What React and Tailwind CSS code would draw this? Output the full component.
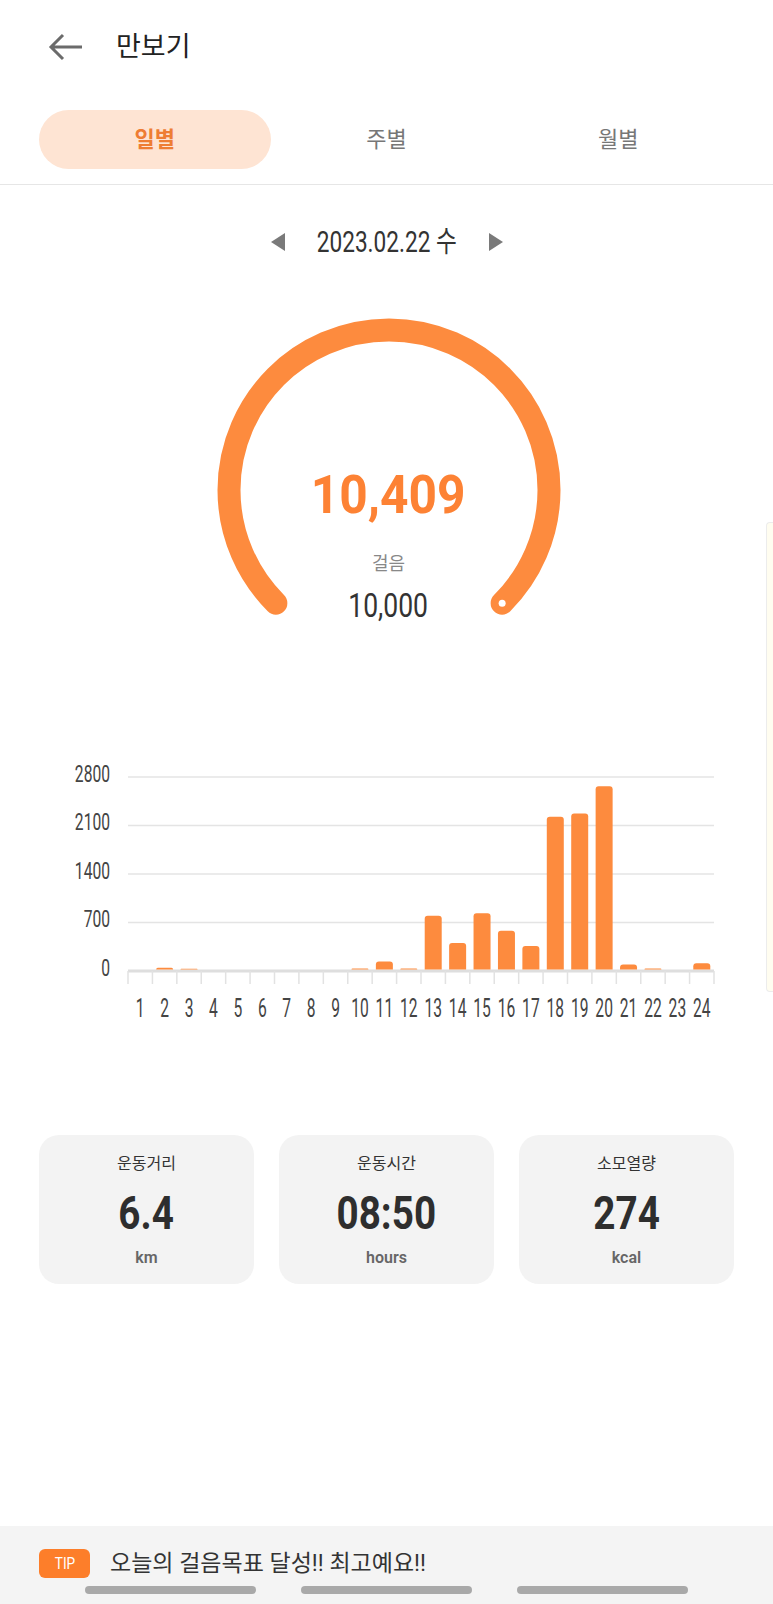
import React from "react";

const ORANGE = "#fd8b3e";

// steps per hour, read off the reference chart
const hourly = [0, 24, 10, 0, 0, 0, 0, 0, 0, 15, 116, 15, 774, 382, 812, 561, 339, 2205, 2253, 2645, 73, 15, 0, 92];

const Cond = ({ w, className = "", children }) => (
    <div className={`flex justify-center ${w}`}>
        <span className={`inline-block whitespace-nowrap ${className}`}>{children}</span>
    </div>
);

const Gauge = () => {
    const cx = 180;
    const cy = 172;
    const r = 160;
    const d = r * Math.SQRT1_2;
    return (
        <svg className="absolute inset-0" width="360" height="320" viewBox="0 0 360 320">
            <path
                d={`M ${cx - d} ${cy + d} A ${r} ${r} 0 1 1 ${cx + d} ${cy + d}`}
                fill="none"
                stroke={ORANGE}
                strokeWidth="23"
                strokeLinecap="round"
            />
            <circle cx={cx + d} cy={cy + d} r="3.5" fill="#fff" />
        </svg>
    );
};

const Chart = () => {
    const left = 128;
    const right = 714;
    const base = 221;
    const step = 48.5;
    const col = (right - left) / 24;
    const barW = 17;
    const perUnit = (step * 4) / 2800;
    const ticks = ["2800", "2100", "1400", "700", "0"];

    return (
        <svg width="773" height="280" viewBox="0 0 773 280" className="block">
            {ticks.map((t, i) => {
                const y = base - (4 - i) * step;
                return (
                    <g key={t}>
                        {i < 4 && <line x1={left} x2={right} y1={y} y2={y} stroke="#e4e4e4" strokeWidth="1.5" />}
                        <text
                            transform={`translate(110 ${y - 3}) scale(0.68 1)`}
                            textAnchor="end"
                            dominantBaseline="central"
                            fontSize="23"
                            fill="#444"
                        >
                            {t}
                        </text>
                    </g>
                );
            })}
            <line x1={left} x2={right} y1={base} y2={base} stroke="#dedede" strokeWidth="3" />
            {Array.from({ length: 25 }).map((_, i) => (
                <line
                    key={i}
                    x1={left + i * col}
                    x2={left + i * col}
                    y1={base}
                    y2={base + 13}
                    stroke="#e2e2e2"
                    strokeWidth="1.5"
                />
            ))}
            {hourly.map((v, i) => {
                const h = v * perUnit;
                const x = left + (i + 0.5) * col - barW / 2;
                const y = base - 1.5 - h;
                if (h <= 0) return null;
                const rr = Math.min(3, h);
                return (
                    <path
                        key={i}
                        d={`M ${x} ${base - 1.5} V ${y + rr} Q ${x} ${y} ${x + rr} ${y} H ${x + barW - rr} Q ${x + barW} ${y} ${x + barW} ${y + rr} V ${base - 1.5} Z`}
                        fill={ORANGE}
                    />
                );
            })}
            {hourly.map((_, i) => (
                <text
                    key={i}
                    transform={`translate(${left + (i + 0.5) * col} 258) scale(0.6 1)`}
                    textAnchor="middle"
                    dominantBaseline="central"
                    fontSize="26"
                    fill="#444"
                >
                    {i + 1}
                </text>
            ))}
        </svg>
    );
};

const StatCard = ({ label, value, unit }) => (
    <div className="flex-1 h-[149px] rounded-[20px] bg-[#f3f3f3] flex flex-col items-center pt-[18px]">
        <div className="text-[16px] leading-[22px] font-normal text-[#333]">{label}</div>
        <Cond w="w-full mt-[16px]" className="text-[46px] leading-[44px] font-bold text-[#2e2e2e] scale-x-[0.84]">
            {value}
        </Cond>
        <div className="mt-[13px] text-[16px] leading-[20px] font-semibold text-[#666]">{unit}</div>
    </div>
);

const App = () => {
    return (
        <div className="relative h-[1604px] overflow-hidden bg-white flex flex-col font-['Roboto','Noto_Sans_CJK_KR',sans-serif]">
            {/* header */}
            <div className="h-[94px] flex items-center pl-[48px] gap-[33px]">
                <svg width="35" height="28" viewBox="0 0 35 28">
                    <path d="M34 14 H3 M15 2 L3 14 L15 26" fill="none" stroke="#6b6b6b" strokeWidth="3" />
                </svg>
                <h1 className="text-[27px] leading-[30px] font-normal text-[#222]">만보기</h1>
            </div>

            {/* tabs */}
            <div className="px-[39px] pt-[16px] pb-[15px] grid grid-cols-3 border-b border-[#e6e6e6]">
                <button className="h-[59px] rounded-full bg-[#fee4d3] text-[22px] font-semibold text-[#ee7d33]">일별</button>
                <button className="h-[59px] rounded-full text-[22px] font-normal text-[#777]">주별</button>
                <button className="h-[59px] rounded-full text-[22px] font-normal text-[#777]">월별</button>
            </div>

            {/* date */}
            <div className="pt-[42px] flex justify-center items-center h-[72px]">
                <svg width="16" height="20" viewBox="0 0 16 20">
                    <polygon points="15,1 1,10 15,19" fill="#7a7a7a" />
                </svg>
                <Cond w="w-[146px] mx-[28px]" className="text-[29px] leading-[30px] text-[#333] scale-x-[0.78]">
                    2023.02.22 수
                </Cond>
                <svg width="16" height="20" viewBox="0 0 16 20">
                    <polygon points="1,1 15,10 1,19" fill="#7a7a7a" />
                </svg>
            </div>

            {/* gauge */}
            <div className="relative mx-auto mt-[61px] w-[360px] h-[320px] translate-x-[2px]">
                <Gauge />
                <div className="relative flex flex-col items-center pt-[147px]">
                    <Cond w="w-full" className="text-[54px] leading-[60px] font-bold text-[#fd8234] scale-x-[0.92]">
                        10,409
                    </Cond>
                    <div className="mt-[27px] text-[18px] leading-[24px] text-[#888]">걸음</div>
                    <Cond w="w-full mt-[11px]" className="text-[34px] leading-[36px] text-[#333] scale-x-[0.78]">
                        10,000
                    </Cond>
                </div>
            </div>

            {/* hourly chart */}
            <div className="mt-[112px]">
                <Chart />
            </div>

            {/* stats */}
            <div className="mt-[105px] px-[39px] flex gap-[25px]">
                <StatCard label="운동거리" value="6.4" unit="km" />
                <StatCard label="운동시간" value="08:50" unit="hours" />
                <StatCard label="소모열량" value="274" unit="kcal" />
            </div>

            {/* tip */}
            <div className="mt-auto h-[78px] bg-[#f4f4f4] pt-[23px]">
                <div className="flex items-center pl-[39px]">
                    <div className="w-[51px] h-[29px] rounded-[6px] bg-[#fd7e2a] flex items-center justify-center">
                        <span className="inline-block text-[16px] text-white scale-x-[0.85]">TIP</span>
                    </div>
                    <p className="ml-[20px] text-[23px] leading-[29px] text-[#333]">오늘의 걸음목표 달성!! 최고예요!!</p>
                </div>
                <div className="mt-[8px] flex pl-[85px] gap-[45px]">
                    <div className="w-[171px] h-[8px] rounded-full bg-[#a9a9a9]"></div>
                    <div className="w-[171px] h-[8px] rounded-full bg-[#a9a9a9]"></div>
                    <div className="w-[171px] h-[8px] rounded-full bg-[#a9a9a9]"></div>
                </div>
            </div>

            {/* side handle on the right edge */}
            <div className="absolute right-0 top-[522px] w-[7px] h-[470px] rounded-l-[4px] bg-[#fffdf0] border border-r-0 border-[#ececec]"></div>
        </div>
    );
};

export default App;
